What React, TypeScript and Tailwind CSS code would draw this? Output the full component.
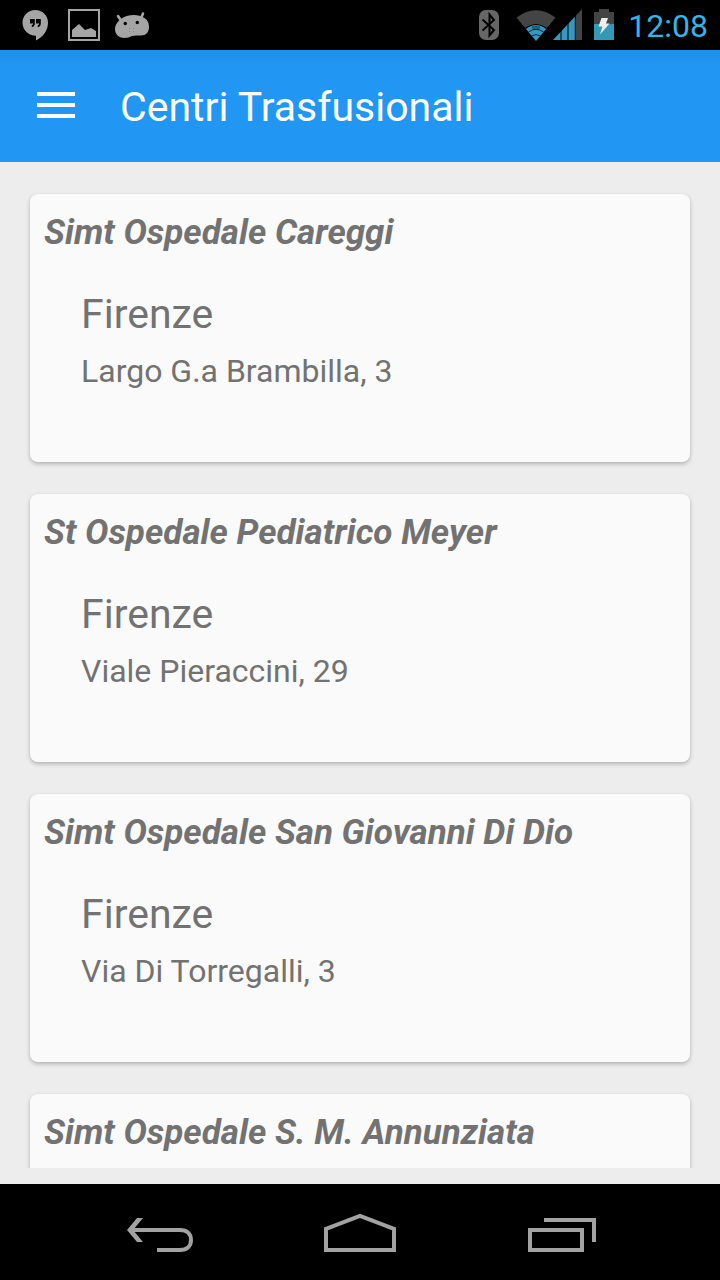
interface Center {
  name: string;
  city: string;
  address: string;
}

const centers: Center[] = [
  { name: 'Simt Ospedale Careggi', city: 'Firenze', address: 'Largo G.a Brambilla, 3' },
  { name: 'St Ospedale Pediatrico Meyer', city: 'Firenze', address: 'Viale Pieraccini, 29' },
  { name: 'Simt Ospedale San Giovanni Di Dio', city: 'Firenze', address: 'Via Di Torregalli, 3' },
  { name: 'Simt Ospedale S. M. Annunziata', city: '', address: '' },
];

function StatusBar() {
  return (
    <div className="flex h-[50px] shrink-0 items-center justify-between bg-black pr-3 pl-[22px]">
      <div className="flex items-center gap-[14px]">
        <svg className="h-8 w-8" viewBox="0 0 32 32" aria-hidden="true">
          <path fill="#a5a5a5" d="M13.3 1C20.3 1 26 6.500 26 13.500c0 8-5 14.500-12 18v-4.700C6.500 26.800.5 21 .5 13.600.5 6.500 6.300 1 13.300 1z" />
          <path fill="#000" d="M8 10h4.800v4.500c0 2-1 3.200-3 3.800v-2c.9-.4 1.300-1 1.300-1.800H8zm6 0h4.800v4.500c0 2-1 3.200-3 3.800v-2c.9-.4 1.300-1 1.300-1.800H14z" />
        </svg>
        <svg className="h-8 w-8" viewBox="0 0 32 32" aria-hidden="true">
          <path fill="none" stroke="#a5a5a5" strokeWidth="2" d="M1 1h30v30H1z" />
          <path fill="#a5a5a5" d="M4 28v-7l7-6 6 6 6-2 5 3v6z" />
        </svg>
        <svg className="h-8 w-9" viewBox="0 0 36 32" aria-hidden="true">
          <path fill="none" stroke="#a5a5a5" strokeWidth="2.600" strokeLinecap="round" d="M4 7l4 6M29 4.500l-2.500 6" />
          <path fill="#a5a5a5" d="M7 10c3-2.500 8-4 13-4 4 0 7 1 9.500 2.500C33.500 10.500 35 14 35 18c0 5-3 8.500-8 8.500-3 0-6-.5-9 .5-2.500 1-4.500 2-8 2-5 0-9-3.500-9-9 0-4 2.500-7.500 6-10z" />
          <circle cx="11.300" cy="14.500" r="1.700" fill="#000" />
          <circle cx="23.300" cy="13.500" r="1.700" fill="#000" />
          <path fill="#858585" d="M15 19h1v1h-1zm4 0h1v1h-1zm-4 3h1v1h-1zm4 0h1v1h-1z" />
        </svg>
      </div>
      <div className="flex items-center">
        <svg className="mr-[17px] h-8 w-5" viewBox="0 0 20 32" aria-hidden="true">
          <rect y="1" width="20" height="30" rx="7" fill="#666" />
          <path fill="none" stroke="#000" strokeWidth="2" d="M3.500 10.500L15 21l-4.500 5.500V5.500L15 11 3.500 21.500" />
        </svg>
        <svg className="h-8 w-10" viewBox="0 0 40 32" aria-hidden="true">
          <path fill="#444" d="M.5 8.500Q20-6 39.500 8.500L20 32z" />
          <path fill="#000" d="M9.500 18.500Q20 11.500 30.500 18.500L20 32z" />
          <path fill="#3399c0" d="M10 20Q20 12 30 20L20 32z" />
          <path fill="#1c6380" d="M15.500 17.500q4.500-2 9 0l-1.500 4q-3-1.500-6 0z" />
          <path fill="none" stroke="#0b2c38" strokeWidth="1" d="M12.500 23q7.500-5.500 15 0M15.500 27q4.500-3 9 0" />
        </svg>
        <svg className="-ml-[3px] h-8 w-8" viewBox="0 0 32 32" aria-hidden="true">
          <path fill="#444" d="M29 0v31h-6.500V7z" />
          <path fill="#3399c0" d="M0 31L22.500 7v24z" />
          <path stroke="#000" strokeWidth="1" d="M8 20v12M15 12v20M22.300 5v27" />
        </svg>
        <svg className="ml-[9px] h-8 w-5" viewBox="0 0 20 32" aria-hidden="true">
          <path fill="#444" d="M5 0h10v3h5v12H0V3h5z" />
          <path fill="#3399b8" d="M0 15h20v16H0z" />
          <path fill="#eee" d="M7.500 9H14l-2 5.500h3.500L6 25.500l2.500-8h-4z" />
        </svg>
        <span className="ml-[14px] pt-0.5 text-[32px] leading-8 text-[#33b5e5]">12:08</span>
      </div>
    </div>
  );
}

function CenterCard({ center }: { center: Center }) {
  return (
    <li className="h-[268px] shrink-0 rounded-lg bg-[#fafafa] px-[14px] pt-4 shadow-[0_2px_4px_rgba(0,0,0,0.25)]">
      <h2 className="text-[35px] leading-[46px] font-bold whitespace-nowrap italic">{center.name}</h2>
      <div className="px-[37px] pt-8">
        <p className="text-[41px] leading-[52px]">{center.city}</p>
        <p className="pt-2.5 text-[32px] leading-[42px]">{center.address}</p>
      </div>
    </li>
  );
}

function NavigationBar() {
  return (
    <nav className="flex h-24 shrink-0 items-center justify-center gap-[106px] bg-black" aria-label="System">
      <button type="button" aria-label="Back" className="flex h-24 w-24 items-center justify-center">
        <svg className="h-24 w-24" viewBox="0 0 96 96" fill="none" stroke="#a2a2a2" strokeWidth="4" aria-hidden="true">
          <path d="M21 46H70c7 0 11 4 11 10s-4 10-11 10H47" />
          <path fill="#a2a2a2" stroke="none" d="M17 46L27 34h6L23 46 33 58h-6z" />
        </svg>
      </button>
      <button type="button" aria-label="Home" className="flex h-24 w-24 items-center justify-center">
        <svg className="h-24 w-24" viewBox="0 0 96 96" fill="none" stroke="#a2a2a2" strokeWidth="4" aria-hidden="true">
          <path d="M14 66V45L48 32 82 45V66z" />
        </svg>
      </button>
      <button type="button" aria-label="Recent apps" className="flex h-24 w-24 items-center justify-center">
        <svg className="h-24 w-24" viewBox="0 0 96 96" fill="none" stroke="#a2a2a2" strokeWidth="4" aria-hidden="true">
          <path d="M16 46h52v20H16zM30 36h50v22" />
        </svg>
      </button>
    </nav>
  );
}

export default function App() {
  return (
    <div className="flex h-screen flex-col overflow-hidden bg-[#ededed] font-[Roboto,sans-serif] text-[#727272]">
      <StatusBar />
      <header className="flex h-28 shrink-0 items-center gap-11 bg-[#2196f3] bg-linear-to-b from-[#2090e9] to-[#2196f3] to-15% px-9 text-white">
        <button type="button" aria-label="Open menu">
          <svg className="h-10 w-10" viewBox="0 0 40 40" fill="#fff" aria-hidden="true">
            <path d="M1 6h38v4H1zM1 17h38v4H1zM1 28h38v4H1z" />
          </svg>
        </button>
        <h1 className="pt-0.5 text-[41px] leading-[50px] whitespace-nowrap">Centri Trasfusionali</h1>
      </header>
      <main className="mb-4 min-h-0 flex-1 overflow-hidden px-[30px] pt-8">
        <ul className="flex flex-col gap-8">
          {centers.map((center) => (
            <CenterCard key={center.name} center={center} />
          ))}
        </ul>
      </main>
      <NavigationBar />
    </div>
  );
}
